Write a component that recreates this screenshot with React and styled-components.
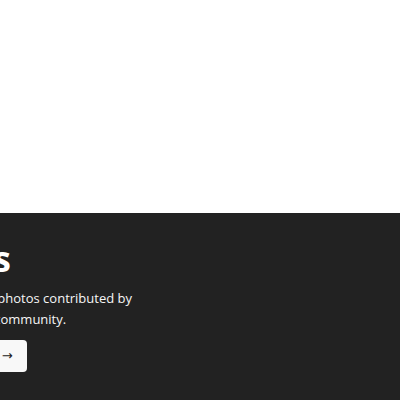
import React from "react";
import styled, { createGlobalStyle } from "styled-components";

const Global = createGlobalStyle`
  html, body { margin: 0; padding: 0; background: #222; }
  body { font-family: "Open Sans", "Noto Sans", sans-serif; overflow: hidden; }
`;

const Page = styled.div`
  display: flex;
  flex-direction: column;
  min-height: 400px;
`;

const Banner = styled.div`
  height: 213px;
  background: #fff;
`;

const Hero = styled.section`
  flex: 1;
  display: flex;
  justify-content: center;
  background: #222;
  padding: 25px 0 28px;
  overflow: hidden;
`;

const Container = styled.div`
  flex: none;
  width: 620px;
  display: flex;
  flex-direction: column;
  align-items: flex-start;
`;

const Title = styled.h1`
  margin: 0 0 8px;
  font-size: 35px;
  line-height: 42px;
  font-weight: 700;
  color: #fff;
`;

const Lead = styled.p`
  margin: 0 0 10px;
  max-width: 248px;
  font-size: 13px;
  line-height: 21px;
  color: #f6f6f6;
`;

const Button = styled.a`
  display: inline-flex;
  align-items: center;
  height: 32px;
  padding: 0 14px;
  box-sizing: border-box;
  border-radius: 4px;
  background: #f8f8f8;
  color: #222;
  font-size: 13px;
  line-height: 18px;
  text-decoration: none;
  white-space: pre;
  cursor: pointer;
`;

const Arrow = styled.span`
  margin-left: 3px;
  font-family: "DejaVu Sans", sans-serif;
  font-size: 13px;
`;

export default function App() {
  return (
    <>
      <Global />
      <Page>
        <Banner />
        <Hero>
          <Container>
            <Title>Photos</Title>
            <Lead>High-quality, free photos contributed by a talented global community.</Lead>
            <Button href="#">
              Explore photos <Arrow>→</Arrow>
            </Button>
          </Container>
        </Hero>
      </Page>
    </>
  );
}
